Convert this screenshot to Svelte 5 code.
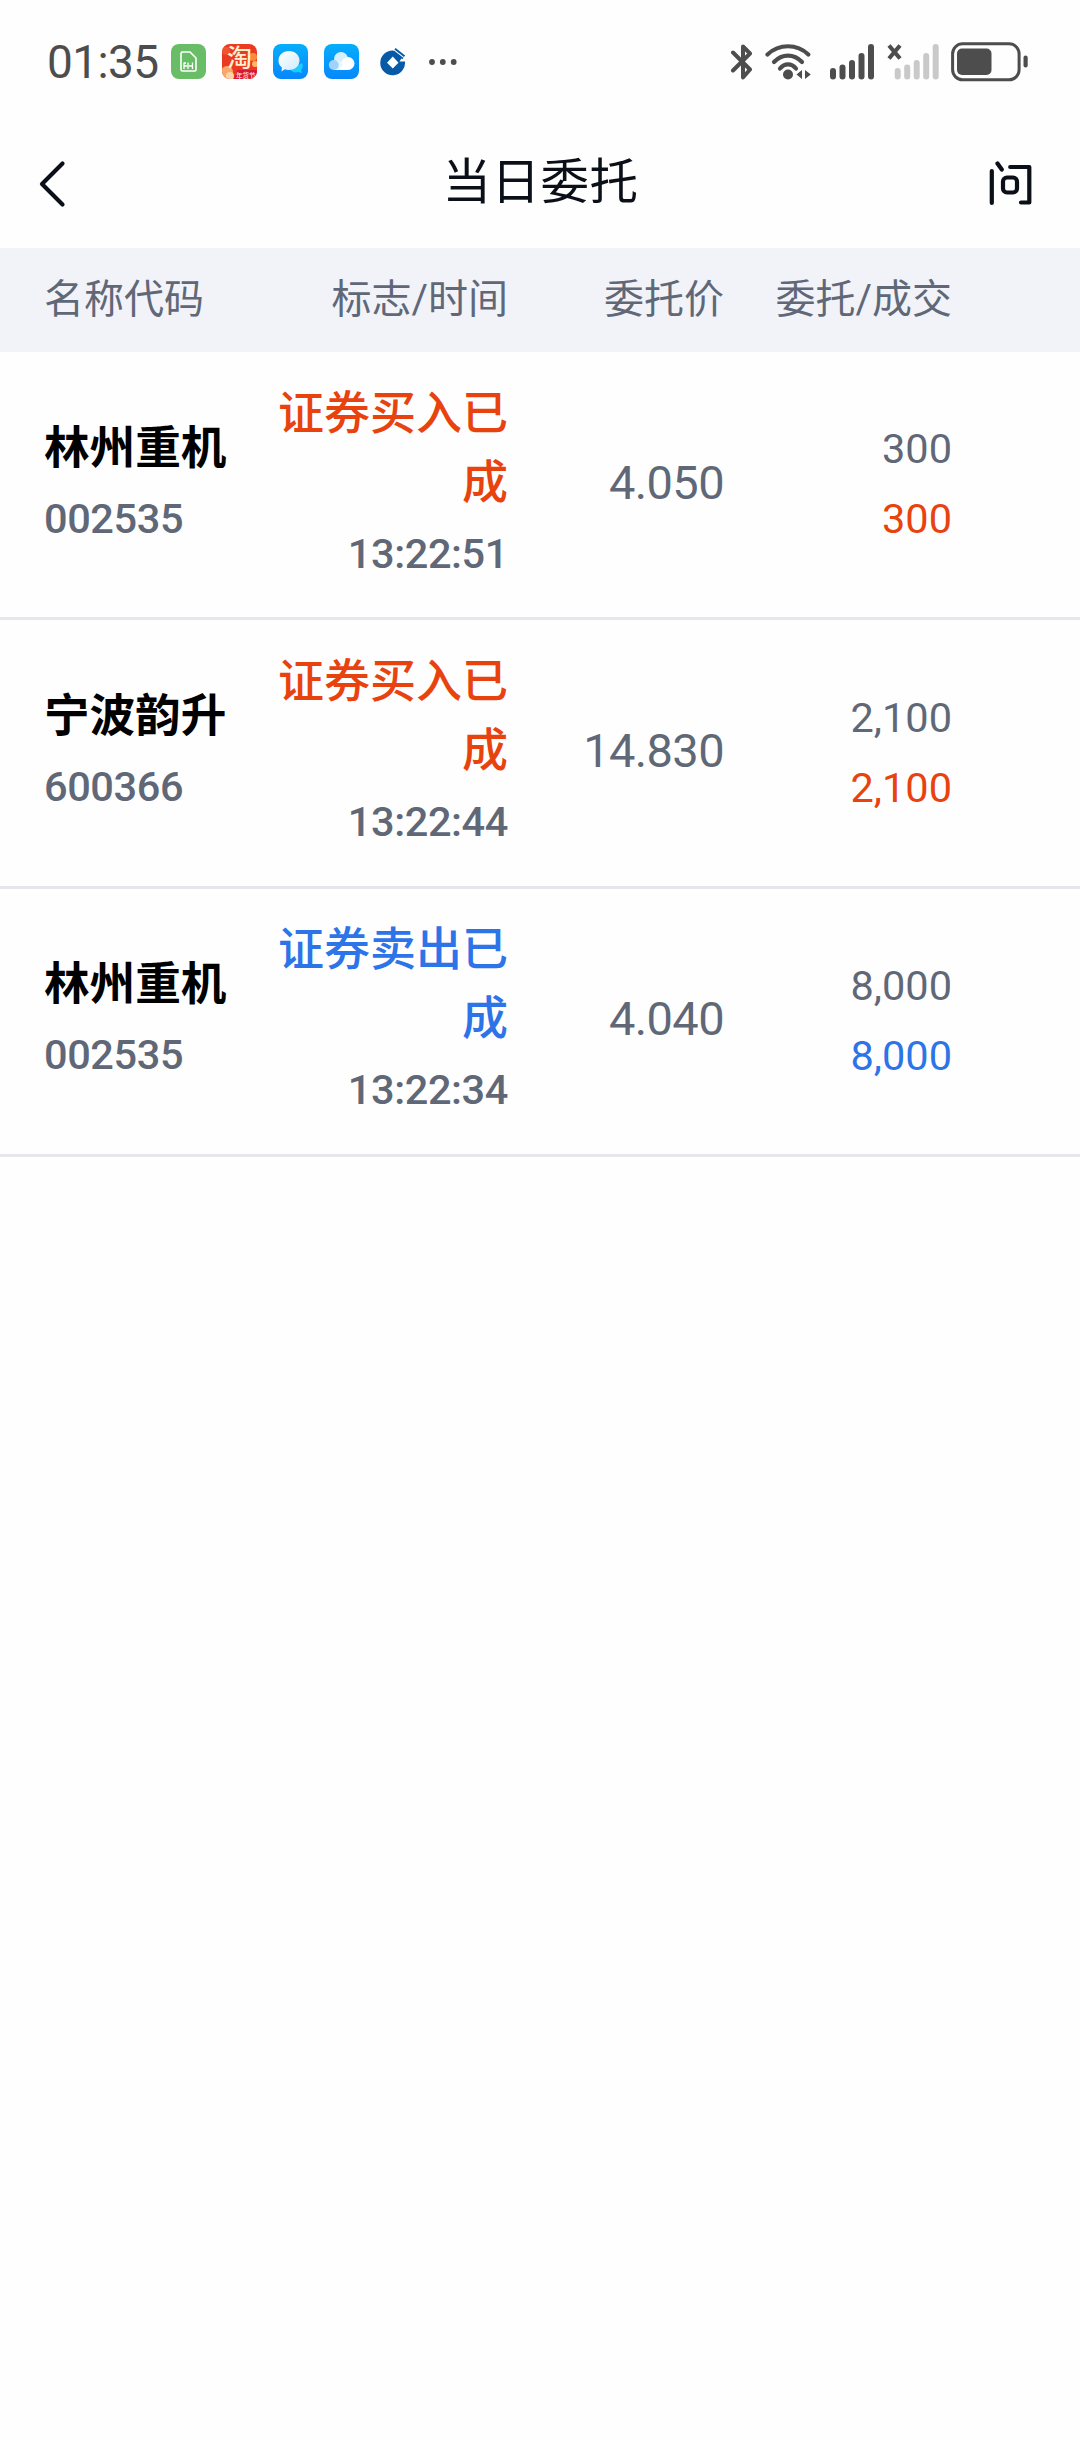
<script>
	const orders = [
		{
			name: "林州重机",
			code: "002535",
			status: "证券买入已成",
			time: "13:22:51",
			price: "4.050",
			amount: "300",
			filled: "300",
			side: "buy",
		},
		{
			name: "宁波韵升",
			code: "600366",
			status: "证券买入已成",
			time: "13:22:44",
			price: "14.830",
			amount: "2,100",
			filled: "2,100",
			side: "buy",
		},
		{
			name: "林州重机",
			code: "002535",
			status: "证券卖出已成",
			time: "13:22:34",
			price: "4.040",
			amount: "8,000",
			filled: "8,000",
			side: "sell",
		},
	];

	// top edge of each signal bar
	const bars = [24, 20.5, 16, 9, 0];
</script>

<div class="statusbar">
	<span class="clock">01:35</span>

	<div class="apps">
		<svg width="35" height="35" viewBox="0 0 35 35">
			<rect width="35" height="35" rx="8" fill="#69bd67" />
			<path d="M11.5 8h7.500l6 6v11.500a1.500 1.500 0 0 1-1.500 1.500h-12a1.500 1.500 0 0 1-1.500-1.500V9.500a1.500 1.500 0 0 1 1.500-1.500z" fill="none" stroke="#fff" stroke-width="1.600" />
			<path d="M13 18.500v6.500M17 18.500v2.500M17 23v2M21.500 18.500v6.500M13 19h2M13 22h8.500" stroke="#fff" stroke-width="1.300" fill="none" />
		</svg>
		<svg width="35" height="35" viewBox="0 0 35 35">
			<defs>
				<clipPath id="tb"><rect width="35" height="35" rx="8" /></clipPath>
			</defs>
			<g clip-path="url(#tb)">
				<rect width="35" height="35" fill="#ea3a22" />
				<circle cx="31" cy="13" r="4" fill="#f68a3d" />
				<circle cx="4" cy="7" r="4" fill="#f0552f" />
				<circle cx="5" cy="28" r="6" fill="#f9a86a" />
				<circle cx="8" cy="32" r="4" fill="#fbd3a6" />
				<circle cx="33" cy="20" r="3" fill="#f9b56c" />
				<path d="M15 26h20v9H12z" fill="#d8163a" />
				<text x="5" y="22.500" font-size="25" font-weight="500" fill="#fff0cf">淘</text>
				<text x="14" y="33.500" font-size="6.500" font-weight="500" fill="#ffe9d0">年货节</text>
			</g>
		</svg>
		<svg width="35" height="35" viewBox="0 0 35 35">
			<defs>
				<linearGradient id="blue" x1="0" y1="0" x2="0" y2="1">
					<stop offset="0" stop-color="#05aefb" />
					<stop offset="1" stop-color="#0787fb" />
				</linearGradient>
				<linearGradient id="white" x1="0" y1="0" x2="1" y2="1">
					<stop offset="0" stop-color="#fff" />
					<stop offset="1" stop-color="#cdeafe" />
				</linearGradient>
			</defs>
			<rect width="35" height="35" rx="8" fill="url(#blue)" />
			<path d="M29 19a6 6 0 0 1-1 7l1 3-4-1a7 7 0 0 1-8-3z" fill="#17cdfb" />
			<path d="M16 7c6 0 10.500 4 10.500 9.500S22 26 16 26c-1.500 0-3-.3-4-.7L8.500 27.500l.3-4A9 9 0 0 1 5.500 16.500C5.500 11 10 7 16 7z" fill="url(#white)" />
		</svg>
		<svg width="35" height="35" viewBox="0 0 35 35">
			<rect width="35" height="35" rx="8" fill="url(#blue)" />
			<circle cx="17" cy="15" r="7" fill="#d5effe" />
			<path d="M15 26c1-7 4-13 9-13a6.300 6.300 0 0 1 0 13z" fill="#fff" />
			<path d="M10 16c4 0 7 2 9 4l-4 6h-5z" fill="#e9f6ff" />
			<circle cx="9.800" cy="21" r="5" fill="#9fd3fb" />
		</svg>
		<svg class="bank" width="26" height="28" viewBox="0 0 26 28">
			<path fill-rule="evenodd" d="M13 2.500L22 9.500L19.500 13.500H25A12.400 12.400 0 1 1 13 2.500zM12.800 8.500L7 14.800L12.800 20.500L18.500 14.800z" fill="#075aa6" />
			<path d="M15 .8l9.500 7.500M13.500 3l9.500 7.500" stroke="#075aa6" stroke-width="2" />
			<path d="M14 2.200l9.500 7.300" stroke="#fff" stroke-width=".7" />
		</svg>
		<svg class="more" width="28" height="6" viewBox="0 0 28 6">
			<circle cx="3" cy="3" r="2.900" />
			<circle cx="13.800" cy="3" r="2.900" />
			<circle cx="24.700" cy="3" r="2.900" />
		</svg>
	</div>

	<div class="system">
		<svg class="bluetooth" width="24" height="36" viewBox="0 0 24 36">
			<path d="M3 8.500L20 25.500L13 33.500V2.500L20 9.500L3 26.500" fill="none" stroke="#4d4d4d" stroke-width="4" stroke-linejoin="round" stroke-linecap="round" />
		</svg>
		<svg class="wifi" width="46" height="36" viewBox="0 0 46 36">
			<g fill="none" stroke="#4d4d4d" stroke-width="4.200" stroke-linecap="round">
				<path d="M2.500 10.500C14-.5 32-.5 43.300 10.500" />
				<path d="M9 18C17 9.500 29 9.500 37 18" />
				<path d="M15 24.500C19.500 19 26.500 19 31 24.500" />
			</g>
			<circle cx="23" cy="30.500" r="5" fill="#4d4d4d" />
			<path d="M37 26v9l-5.500-4.500zM40 26v9l5.800-4.500z" fill="#4d4d4d" />
		</svg>
		<svg class="signal" width="45" height="36" viewBox="0 0 45 36">
			{#each bars as top, i}
				<rect x={i * 9.5} y={top} width="6" height={35.5 - top} rx="3" fill="#4d4d4d" />
			{/each}
		</svg>
		<svg class="signal" width="52" height="36" viewBox="0 0 52 36">
			{#each bars as top, i}
				<rect x={7.7 + i * 9.5} y={top} width="6" height={35.5 - top} rx="3" fill="#c9c9c9" />
			{/each}
			<path d="M2 1.500L13 14.500M13 1.500L2 14.500" stroke="#4d4d4d" stroke-width="4.200" />
		</svg>
		<svg width="77" height="40" viewBox="0 0 77 40">
			<rect x="1.600" y="1.800" width="66.500" height="36" rx="10" fill="none" stroke="#4d4d4d" stroke-width="3" />
			<rect x="6" y="6.500" width="34.500" height="26.500" rx="5" fill="#4d4d4d" />
			<rect x="72.500" y="13.500" width="4.200" height="12" rx="2.100" fill="#4d4d4d" />
		</svg>
	</div>
</div>

<div class="navbar">
	<svg width="30" height="48" viewBox="0 0 30 48">
		<path d="M25.500 3.500L5 24L25.500 44.500" fill="none" stroke="#0b0f18" stroke-width="4.200" stroke-linecap="round" stroke-linejoin="round" />
	</svg>
	<h1>当日委托</h1>
	<svg class="ask" width="44" height="46" viewBox="0 0 44 46">
		<g fill="none" stroke="#0b0f18" stroke-width="4.200" stroke-linecap="round" stroke-linejoin="round">
			<path d="M3.800 10V42" />
			<path d="M9.500 2.500L13.800 8.500" />
			<path d="M22.200 6H41.300V41.500H33" />
			<rect x="15" y="16.500" width="14" height="15" rx="4" />
		</g>
	</svg>
</div>

<div class="row head">
	<span>名称代码</span>
	<span>标志/时间</span>
	<span>委托价</span>
	<span>委托/成交</span>
</div>

{#each orders as order}
	<div class="row order {order.side}">
		<div>
			<div class="name">{order.name}</div>
			<div class="code">{order.code}</div>
		</div>
		<div>
			<div class="status">{order.status}</div>
			<div class="code">{order.time}</div>
		</div>
		<div class="price">{order.price}</div>
		<div class="amount">
			<div>{order.amount}</div>
			<div class="filled">{order.filled}</div>
		</div>
	</div>
{/each}

<style>
	:global(body) {
		margin: 0;
		background: #fefefe;
		font-family: Roboto, "Noto Sans CJK SC", sans-serif;
		color: #000;
	}

	svg {
		display: block;
		flex: none;
	}

	.statusbar {
		display: flex;
		align-items: center;
		box-sizing: border-box;
		height: 123px;
		padding: 0 52px 0 47px;
	}

	.clock {
		width: 124px;
		font-size: 46px;
		line-height: 54px;
		letter-spacing: -0.6px;
		color: #4d4d4d;
	}

	.apps {
		display: flex;
		align-items: center;
		gap: 16px;
	}

	.bank {
		margin-left: 5px;
	}

	.more {
		margin-left: 7px;
		fill: #4d4d4d;
	}

	.system {
		display: flex;
		align-items: center;
		margin-left: auto;
	}

	.bluetooth {
		margin-right: 11px;
	}

	.wifi {
		margin-right: 19px;
	}

	.signal {
		margin-right: 12px;
	}

	.navbar {
		display: grid;
		grid-template-columns: 1fr auto 1fr;
		align-items: center;
		box-sizing: border-box;
		height: 125px;
		padding: 0 48px 4px 37px;
	}

	.ask {
		justify-self: end;
	}

	h1 {
		margin: 0 0 1px 12px;
		font-size: 48.5px;
		line-height: 70px;
		font-weight: 400;
		letter-spacing: 0.5px;
		color: #0b0f18;
	}

	.row {
		display: grid;
		grid-template-columns: 234px 230px 216px 228px;
		align-items: center;
		box-sizing: border-box;
		padding-left: 44px;
		text-align: right;
		color: #606878;
	}

	.row > :first-child {
		text-align: left;
	}

	.head {
		height: 104px;
		padding-bottom: 8px;
		background: #f2f3f8;
		font-size: 40px;
	}

	.order {
		height: 268.4px;
		padding-bottom: 2px;
		border-bottom: 3px solid #e5e7ed;
		line-height: 70px;
	}

	.name {
		font-size: 45.6px;
		font-weight: 700;
		color: #000;
	}

	.status {
		margin-bottom: 2px;
		font-size: 46px;
		line-height: 69px;
		font-weight: 500;
	}

	.code {
		font-size: 41.5px;
		font-weight: 500;
		letter-spacing: -0.4px;
	}

	.price {
		padding-bottom: 2px;
		font-size: 47px;
		letter-spacing: -0.6px;
	}

	.amount {
		padding-top: 1px;
		font-size: 41.5px;
	}

	.buy .status,
	.buy .filled {
		color: #e8430f;
	}

	.sell .status,
	.sell .filled {
		color: #2c74e8;
	}
</style>
